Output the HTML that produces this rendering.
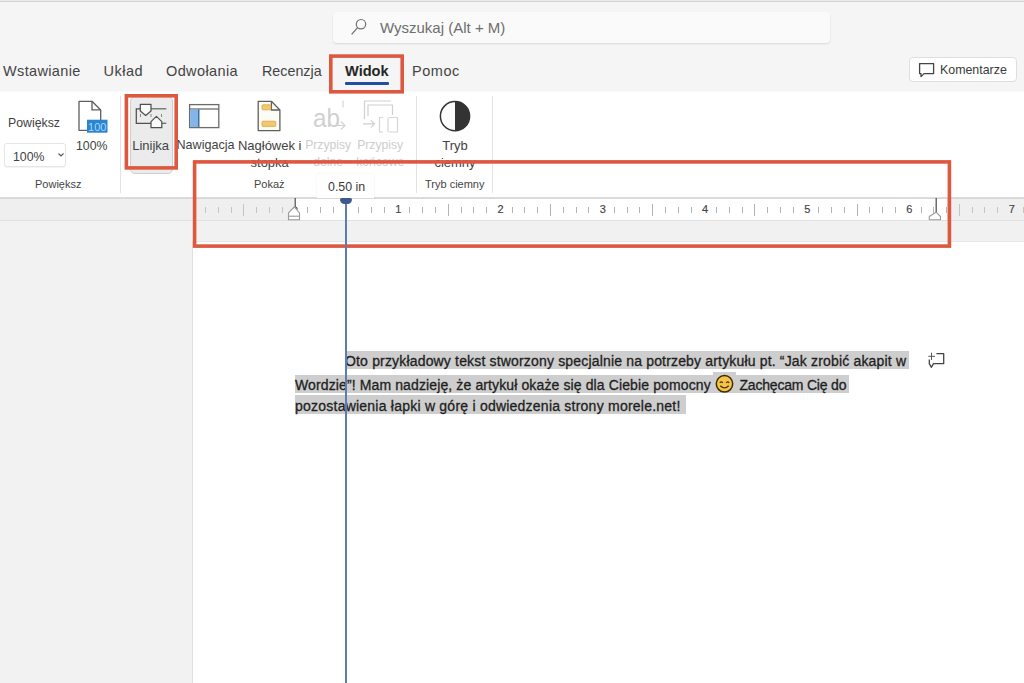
<!DOCTYPE html>
<html><head><meta charset="utf-8">
<style>
*{box-sizing:border-box;margin:0;padding:0}
html,body{width:1024px;height:683px;overflow:hidden;background:#f5f5f5;font-family:"Liberation Sans",sans-serif;color:#323130;position:relative}
.a{position:absolute;white-space:nowrap}
.tab{position:absolute;top:61px;font-size:14.5px;line-height:20px;color:#444}
.lbl{position:absolute;font-size:13px;line-height:17px;color:#424242;text-align:center}
.grp{position:absolute;top:178px;font-size:11px;line-height:13px;color:#444}
.dis{color:#cdcdcd}
.sep{position:absolute;top:96px;width:1px;height:97px;background:#e3e3e3}
.red{position:absolute;border:3px solid #de5840}
.doc{position:absolute;font-size:14px;line-height:18px;color:#1e1e1e;white-space:nowrap;-webkit-text-stroke:.3px #1e1e1e}
.hl{background:#cecece}
.rt{position:absolute;top:207px;width:1px;height:6px;background:#b3b3b3}
.rn{position:absolute;top:203px;width:9px;text-align:center;font-size:11px;line-height:12px;font-weight:normal;color:#444;-webkit-text-stroke:.15px #444}
</style></head><body>
<!-- top line -->
<div class="a" style="left:0;top:0;width:1024px;height:1px;background:#e9e9e9"></div>
<div class="a" style="left:0;top:1px;width:1024px;height:1px;background:#d4d4d4"></div>

<!-- search -->
<div class="a" style="left:333px;top:12px;width:497px;height:31px;background:#fafafa;border-radius:4px;box-shadow:0 1px 2px rgba(0,0,0,.12)"></div>
<svg class="a" style="left:349px;top:18px" width="20" height="20" viewBox="0 0 20 20"><circle cx="12" cy="6.2" r="4.7" fill="none" stroke="#707070" stroke-width="1.2"/><path d="M8.6 9.6 L2.6 16.4" stroke="#707070" stroke-width="1.3" fill="none"/></svg>
<div class="a" style="left:380px;top:19px;font-size:15px;line-height:18px;color:#6e6e6e">Wyszukaj (Alt + M)</div>

<!-- tabs -->
<div class="tab" style="left:3px;letter-spacing:.35px">Wstawianie</div>
<div class="tab" style="left:103.5px;letter-spacing:.5px">Układ</div>
<div class="tab" style="left:166px;letter-spacing:.38px">Odwołania</div>
<div class="tab" style="left:262px;font-size:14.3px">Recenzja</div>
<div class="tab" style="left:345px;font-weight:bold;color:#262626;font-size:14.6px">Widok</div>
<div class="a" style="left:345px;top:82px;width:44px;height:2.5px;background:#1f4f9e;border-radius:1px"></div>
<div class="tab" style="left:412px;letter-spacing:.55px">Pomoc</div>

<!-- komentarze -->
<div class="a" style="left:909px;top:57px;width:108px;height:25px;background:#fff;border:1px solid #dedede;border-radius:4px"></div>
<svg class="a" style="left:918px;top:62px" width="18" height="17" viewBox="0 0 18 17"><path d="M1.6 1.6 H15.6 V11.6 H6 L3 14.6 V11.6 H1.6 Z" fill="none" stroke="#444" stroke-width="1.3" stroke-linejoin="round"/></svg>
<div class="a" style="left:940px;top:63px;font-size:12.4px;line-height:15px;color:#3a3a3a">Komentarze</div>

<!-- ribbon -->
<div class="a" style="left:0;top:92px;width:1024px;height:106px;background:#fff;border-bottom:1px solid #dcdcdc"></div>
<div class="a" style="left:0;top:91px;width:1024px;height:1px;background:#fafafa"></div>

<!-- Powiększ group -->
<div class="lbl" style="left:8px;top:115px;font-size:12.3px">Powiększ</div>
<div class="a" style="left:4px;top:143px;width:62px;height:24px;border:1px solid #e6e6e6;border-radius:3px;background:#fff;box-shadow:0 1px 1px rgba(0,0,0,.05)"></div>
<div class="lbl" style="left:13px;top:148.5px;font-size:12.3px">100%</div>
<svg class="a" style="left:56.5px;top:152px" width="8" height="6" viewBox="0 0 8 6"><path d="M1.5 1.5 L4 4 L6.5 1.5" fill="none" stroke="#555" stroke-width="1.1"/></svg>
<svg class="a" style="left:76px;top:99px" width="34" height="36" viewBox="0 0 34 36">
 <path d="M3 2.3 H16 L24.7 11 V31.3 H3 Z" fill="#fff" stroke="#5f5f5f" stroke-width="1.3" stroke-linejoin="round"/>
 <path d="M16 2.3 V10.8 H24.7" fill="none" stroke="#5f5f5f" stroke-width="1.3"/>
 <rect x="11" y="20.7" width="20.5" height="13" fill="#2b84cf"/>
 <text x="21.3" y="31.5" font-family="Liberation Sans" font-size="11" fill="#a9d6ff" text-anchor="middle">100</text>
</svg>
<div class="lbl" style="left:76px;top:138px;font-size:12.3px">100%</div>
<div class="grp" style="left:35px">Powiększ</div>
<div class="sep" style="left:120px"></div>

<!-- Pokaż group -->
<div class="a" style="left:130px;top:96px;width:43px;height:78px;background:#ebebeb;border:1px solid #cfcfcf;border-radius:5px"></div>
<svg class="a" style="left:132px;top:100px" width="38" height="32" viewBox="0 0 38 32">
 <path d="M8.3 8.8 H4.3 V23.3 H19" fill="none" stroke="#505050" stroke-width="1.25"/>
 <path d="M19 8.8 H34.3" fill="none" stroke="#666" stroke-width="1.25"/>
 <path d="M29.8 23.3 H34.3" fill="none" stroke="#6a6a6a" stroke-width="1.3"/>
 <path d="M8.3 4.3 H19 V11 L13.7 15.4 L8.3 11 Z" fill="#fafafa" stroke="#505050" stroke-width="1.25" stroke-linejoin="round"/>
 <path d="M19 21.6 L24.4 16.4 L29.8 21.6 V27.7 H19 Z" fill="#fafafa" stroke="#505050" stroke-width="1.25" stroke-linejoin="round"/>
 <path d="M8.5 14 V17 M19 14 V17 M29.5 14 V17" stroke="#8a8a8a" stroke-width="1"/>
</svg>
<div class="lbl" style="left:100.7px;top:136.5px;width:100px">Linijka</div>

<svg class="a" style="left:186px;top:101px" width="36" height="30" viewBox="0 0 36 30">
 <rect x="3.6" y="3.6" width="29.2" height="23" fill="#fff" stroke="#6b6b6b" stroke-width="1.3"/>
 <path d="M3.6 8 H32.8" stroke="#6b6b6b" stroke-width="1.3"/>
 <rect x="4.2" y="8.6" width="8.4" height="17.4" fill="#83b5ea"/>
 <path d="M12.8 8.6 V26" stroke="#2c5f96" stroke-width="1.3"/>
</svg>
<div class="lbl" style="left:155.5px;top:136.5px;width:100px;font-size:12.6px">Nawigacja</div>

<svg class="a" style="left:255px;top:99px" width="28" height="34" viewBox="0 0 28 34">
 <path d="M3.2 2.3 H16.4 L24.9 11 V31.6 H3.2 Z" fill="#fdfbf6" stroke="#5f5f5f" stroke-width="1.3" stroke-linejoin="round"/>
 <path d="M16.4 2.3 V11 H24.9" fill="none" stroke="#5f5f5f" stroke-width="1.3"/>
 <rect x="7" y="5.8" width="8.8" height="5" rx="1" fill="#f3c86f" stroke="#d9a441" stroke-width=".8"/>
 <rect x="7" y="22.2" width="13.8" height="5.2" rx="1" fill="#f3c86f" stroke="#d9a441" stroke-width=".8"/>
</svg>
<div class="lbl" style="left:219.7px;top:136.5px;width:100px">Nagłówek i<br>stopka</div>

<svg class="a" style="left:310px;top:97px" width="40" height="36" viewBox="0 0 40 36">
 <text x="3" y="30" font-family="Liberation Sans" font-size="25" fill="#d0d0d0" textLength="27" lengthAdjust="spacingAndGlyphs">ab</text>
 <path d="M33 3.5 V10.5" stroke="#d4d4d4" stroke-width="1.1"/>
 <path d="M22 28.5 H35 M31 24.5 L35 28.5 L31 32.5" fill="none" stroke="#d2d2d2" stroke-width="1.1"/>
</svg>
<div class="lbl dis" style="left:278.2px;top:136.5px;width:100px;font-size:12.2px">Przypisy<br>dolne</div>

<svg class="a" style="left:360px;top:97px" width="40" height="38" viewBox="0 0 40 38">
 <path d="M4.5 22 V4 H31 M8 19 V8 H32.5 V18" fill="none" stroke="#d0d0d0" stroke-width="1.2"/>
 <path d="M3 26.8 H14.5 M11 23.3 L14.5 26.8 L11 30.3" fill="none" stroke="#d0d0d0" stroke-width="1.2"/>
 <path d="M23 20.5 H19.5 V35 H23 M29 20.5 H37.5 V35 H29 M28 20.5 V35" fill="none" stroke="#d6d6d6" stroke-width="1.2"/>
</svg>
<div class="lbl dis" style="left:330.2px;top:136.5px;width:100px;font-size:12.2px">Przypisy<br>końcowe</div>
<div class="grp" style="left:254px">Pokaż</div>
<div class="sep" style="left:416px"></div>

<!-- Tryb ciemny group -->
<svg class="a" style="left:437px;top:98px" width="36" height="36" viewBox="0 0 36 36">
 <circle cx="18" cy="18.2" r="14.6" fill="#fbfbfb" stroke="#333" stroke-width="1.5"/>
 <path d="M18 3.6 A14.6 14.6 0 0 1 18 32.8 Z" fill="#333"/>
</svg>
<div class="lbl" style="left:405px;top:136.5px;width:100px">Tryb<br>ciemny</div>
<div class="grp" style="left:425px">Tryb ciemny</div>
<div class="sep" style="left:492px"></div>

<!-- tooltip -->
<div class="a" style="left:317px;top:174px;width:57px;height:24px;background:#fff;box-shadow:0 0 2px rgba(0,0,0,.08)"></div>
<div class="a" style="left:328px;top:179.5px;font-size:12.4px;line-height:15px;color:#383838">0.50 in</div>

<!-- ruler -->
<div class="a" style="left:0;top:198px;width:1024px;height:23px;background:#efefef;border-top:1px solid #d9d9d9;border-bottom:1px solid #e0e0e0"></div>
<div class="a" style="left:294px;top:199px;width:653px;height:21px;background:#fff"></div>
<div id="ticks">
<div class="rt" style="left:204.9px;background:#c4c4c4"></div>
<div class="rt" style="left:217.7px;background:#c4c4c4"></div>
<div class="rt" style="left:230.5px;background:#c4c4c4"></div>
<div class="rt" style="left:243.3px;top:204px;height:12px;background:#c4c4c4"></div>
<div class="rt" style="left:256.1px;background:#c4c4c4"></div>
<div class="rt" style="left:268.8px;background:#c4c4c4"></div>
<div class="rt" style="left:281.6px;background:#c4c4c4"></div>
<div class="rt" style="left:307.2px"></div>
<div class="rt" style="left:319.9px"></div>
<div class="rt" style="left:332.7px"></div>
<div class="rt" style="left:345.5px;top:204px;height:12px"></div>
<div class="rt" style="left:358.3px"></div>
<div class="rt" style="left:371.1px"></div>
<div class="rt" style="left:383.8px"></div>
<div class="rn" style="left:393.8px">1</div>
<div class="rt" style="left:409.4px"></div>
<div class="rt" style="left:422.2px"></div>
<div class="rt" style="left:435.0px"></div>
<div class="rt" style="left:447.7px;top:204px;height:12px"></div>
<div class="rt" style="left:460.5px"></div>
<div class="rt" style="left:473.3px"></div>
<div class="rt" style="left:486.1px"></div>
<div class="rn" style="left:496.0px">2</div>
<div class="rt" style="left:511.6px"></div>
<div class="rt" style="left:524.4px"></div>
<div class="rt" style="left:537.2px"></div>
<div class="rt" style="left:550.0px;top:204px;height:12px"></div>
<div class="rt" style="left:562.7px"></div>
<div class="rt" style="left:575.5px"></div>
<div class="rt" style="left:588.3px"></div>
<div class="rn" style="left:598.3px">3</div>
<div class="rt" style="left:613.8px"></div>
<div class="rt" style="left:626.6px"></div>
<div class="rt" style="left:639.4px"></div>
<div class="rt" style="left:652.2px;top:204px;height:12px"></div>
<div class="rt" style="left:665.0px"></div>
<div class="rt" style="left:677.7px"></div>
<div class="rt" style="left:690.5px"></div>
<div class="rn" style="left:700.5px">4</div>
<div class="rt" style="left:716.1px"></div>
<div class="rt" style="left:728.8px"></div>
<div class="rt" style="left:741.6px"></div>
<div class="rt" style="left:754.4px;top:204px;height:12px"></div>
<div class="rt" style="left:767.2px"></div>
<div class="rt" style="left:780.0px"></div>
<div class="rt" style="left:792.7px"></div>
<div class="rn" style="left:802.7px">5</div>
<div class="rt" style="left:818.3px"></div>
<div class="rt" style="left:831.1px"></div>
<div class="rt" style="left:843.9px"></div>
<div class="rt" style="left:856.6px;top:204px;height:12px"></div>
<div class="rt" style="left:869.4px"></div>
<div class="rt" style="left:882.2px"></div>
<div class="rt" style="left:895.0px"></div>
<div class="rn" style="left:904.9px">6</div>
<div class="rt" style="left:920.5px"></div>
<div class="rt" style="left:933.3px"></div>
<div class="rt" style="left:946.1px"></div>
<div class="rt" style="left:958.9px;top:204px;height:12px;background:#c4c4c4"></div>
<div class="rt" style="left:971.6px;background:#c4c4c4"></div>
<div class="rt" style="left:984.4px;background:#c4c4c4"></div>
<div class="rt" style="left:997.2px;background:#c4c4c4"></div>
<div class="rn" style="left:1007.2px">7</div>
<div class="rt" style="left:1022.7px;background:#c4c4c4"></div>
</div>
<svg class="a" style="left:285px;top:197px" width="18" height="25" viewBox="0 0 18 25">
 <path d="M10.2 1 V10" stroke="#555" stroke-width="1.3"/>
 <path d="M10.2 10 A2 2 0 0 1 12 12.5" fill="none" stroke="#555" stroke-width="1.2"/>
 <path d="M3.5 15.8 L9.2 10 L14.5 15.8 V22.8 H3.5 Z" fill="#fff" stroke="#9a9a9a" stroke-width="1.1" stroke-linejoin="round"/>
 <path d="M3.5 19.2 H14.5" stroke="#9a9a9a" stroke-width="1.1"/>
</svg>
<svg class="a" style="left:926px;top:197px" width="18" height="25" viewBox="0 0 18 25">
 <path d="M10.2 1 V15" stroke="#555" stroke-width="1.3"/>
 <path d="M3.3 19.5 L10 15.2 L14.5 19.5 V22.7 H3.3 Z" fill="#fff" stroke="#9a9a9a" stroke-width="1.1" stroke-linejoin="round"/>
</svg>
<!-- gray band below ruler -->
<div class="a" style="left:0;top:221px;width:1024px;height:21px;background:#f1f1f1;border-bottom:1px solid #e8e6e6"></div>

<!-- page -->
<div class="a" style="left:192px;top:242px;width:832px;height:441px;background:#fff;border-left:1px solid #e0e0e0"></div>
<div class="a" style="left:0;top:221px;width:192px;height:462px;background:#f2f2f2"></div>

<!-- document text -->
<div class="a hl" style="left:345px;top:351px;height:18px;width:564px"></div>
<div class="doc" style="left:345px;top:351.5px;letter-spacing:.17px">Oto przykładowy tekst stworzony specjalnie na potrzeby artykułu pt. “Jak zrobić akapit w</div>
<div class="a hl" style="left:295px;top:375px;height:18px;width:554px"></div>
<div class="doc" style="left:295px;top:375.5px;letter-spacing:.12px">Wordzie”! Mam nadzieję, że artykuł okaże się dla Ciebie pomocny</div>
<div class="doc" style="left:739.5px;top:375.5px;letter-spacing:-.2px">Zachęcam Cię do</div>
<div class="a hl" style="left:295px;top:395px;height:19px;width:391px"></div>
<div class="doc" style="left:295px;top:396.5px;letter-spacing:.23px">pozostawienia łapki w górę i odwiedzenia strony morele.net!</div>
<div class="a" style="left:713px;top:372px;width:23px;height:21px;background:#cecece"></div>
<svg class="a" style="left:714px;top:374px" width="21" height="20" viewBox="0 0 21 20">
 <circle cx="10.5" cy="9.8" r="8.2" fill="#f6c545" stroke="#3b2a0c" stroke-width="1.5"/>
 <path d="M5.8 9 Q7.3 6.8 8.8 9 M12.2 9 Q13.7 6.8 15.2 9" fill="none" stroke="#4a320c" stroke-width="1.2"/>
 <path d="M6.3 11.8 Q10.5 16 14.7 11.8" fill="none" stroke="#4a320c" stroke-width="1.4"/>
</svg>
<!-- comment icon -->
<svg class="a" style="left:926px;top:350px" width="20" height="20" viewBox="0 0 20 20">
 <path d="M10.4 3.7 H17.7 V13.6 H7.5 L5.3 17.3 L3.3 13.6 V9.5" fill="none" stroke="#444" stroke-width="1.3" stroke-linejoin="round"/>
 <path d="M2.3 6.3 H9 M5.5 2.7 V10" stroke="#555" stroke-width="1"/>
</svg>
<!-- red boxes -->
<svg class="a" style="left:0;top:0" width="1024" height="683" viewBox="0 0 1024 683">
 <g fill="none" stroke="#de5840" stroke-width="3.6">
  <rect x="330.8" y="56.1" width="71.4" height="35.7"/>
  <rect x="126.4" y="95.8" width="49.8" height="72.1"/>
  <rect x="194.6" y="161.9" width="754.8" height="84.2"/>
 </g>
</svg>
<!-- blue cursor line -->
<div class="a" style="left:345px;top:198px;width:2px;height:485px;background:#5c7db3"></div>
<div class="a" style="left:339.5px;top:198px;width:12px;height:6px;background:#3d5a8a;border-radius:2px 2px 6px 6px"></div>
</body></html>
